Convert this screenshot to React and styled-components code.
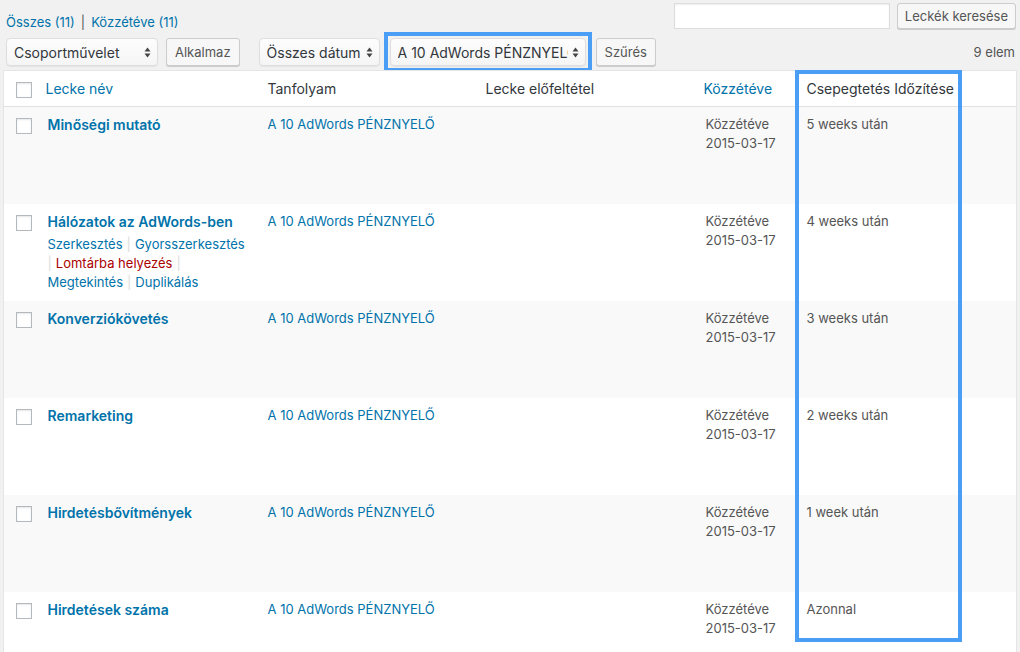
import React from "react";
import styled, { createGlobalStyle } from "styled-components";

const linkBlue = "#0073aa";
const textGray = "#555";
const darkText = "#32373c";
const markBlue = "#4a9ef5";

const GlobalStyle = createGlobalStyle`
    html, body {
        margin: 0;
        padding: 0;
        background: #f1f1f1;
    }
    body {
        font-family: Inter, "Liberation Sans", Arial, sans-serif;
        font-size: 13px;
        color: ${textGray};
        overflow: hidden;
    }
    * { box-sizing: border-box; }
`;

const Page = styled.div`
    width: 1020px;
    height: 652px;
    padding: 3px 3px 0 3px;
    overflow: hidden;
`;

const TopBar = styled.div`
    display: flex;
    justify-content: space-between;
    align-items: flex-start;
    height: 26px;
`;

const SubSub = styled.div`
    margin: 10px 0 0 3px;
    line-height: 19px;
    color: ${textGray};
`;

const Link = styled.a`
    color: ${props => props.danger ? "#a00" : linkBlue};
    text-decoration: none;
`;

const Title = styled.a`
    display: block;
    color: ${linkBlue};
    font-weight: 600;
    font-size: 14px;
    line-height: 19px;
    text-decoration: none;
`;

const Sep = styled.span`
    color: ${props => props.light ? "#ddd" : textGray};
    margin: 0 ${props => props.light ? "4px" : "6px"};
    margin-left: ${props => props.first ? "0" : undefined};
`;

const SearchBox = styled.div`
    display: flex;
    gap: 7px;
    margin-right: 1px;
`;

const SearchInput = styled.input`
    width: 216px;
    height: 26px;
    border: 1px solid #ddd;
    box-shadow: inset 0 1px 2px rgba(0, 0, 0, 0.07);
    background: #fff;
    margin: 0;
`;

const Button = styled.button`
    height: ${props => props.small ? "26px" : "28px"};
    padding: 0 ${props => props.small ? 7 : 8}px;
    margin: 0;
    background: #f7f7f7;
    border: 1px solid #ccc;
    border-radius: 3px;
    box-shadow: 0 1px 0 #ccc;
    color: ${textGray};
    font-family: inherit;
    font-size: 13px;
    white-space: nowrap;
    cursor: pointer;
`;

const Toolbar = styled.div`
    display: flex;
    align-items: center;
    height: 28px;
    margin-top: 9px;
    padding-left: 3px;
`;

const Group = styled.div`
    display: flex;
    align-items: center;
    gap: ${props => props.gap || 8}px;
    margin-right: ${props => props.after || 0}px;
`;

const SelectBox = styled.div`
    display: flex;
    align-items: center;
    gap: 4px;
    width: ${props => props.w}px;
    height: 28px;
    padding: 0 6px 0 7px;
    background: linear-gradient(#fdfdfd, #f5f5f5);
    border: 1px solid #dedede;
    border-radius: 4px;
    box-shadow: 0 1px 1px rgba(0, 0, 0, 0.06);
    color: ${darkText};
    font-size: 14px;
    white-space: nowrap;
    overflow: hidden;
`;

const SelectText = styled.span`
    overflow: hidden;
    flex: 1;
`;

const Mark = styled.div`
    display: flex;
    padding: 2px;
    margin: -6px;
    border: 4px solid ${markBlue};
`;

const Count = styled.div`
    margin-left: auto;
    margin-right: 2px;
    color: ${textGray};
`;

const TableWrap = styled.div`
    position: relative;
    margin-top: 4px;
    width: 1014px;
`;

const Table = styled.table`
    width: 1014px;
    table-layout: fixed;
    border-collapse: collapse;
    background: #fff;
    border: 1px solid #e5e5e5;
`;

const Th = styled.th`
    text-align: left;
    font-weight: 400;
    font-size: 14px;
    color: ${props => props.sort ? linkBlue : darkText};
    padding: 8px 8px;
    line-height: 19px;
    border-bottom: 1px solid #e1e1e1;
    white-space: nowrap;
`;

const CheckTh = styled.th`
    padding: 11px 0 0 12px;
    vertical-align: top;
    border-bottom: 1px solid #e1e1e1;
`;

const Row = styled.tr`
    background: ${props => props.odd ? "#f9f9f9" : "#fff"};
`;

const Td = styled.td`
    vertical-align: top;
    padding: 8px 8px 9px ${props => props.pl || 8}px;
    line-height: 19px;
    color: ${textGray};
`;

const CheckTd = styled.td`
    vertical-align: top;
    padding: 11px 0 0 12px;
`;

const Check = styled.span`
    display: block;
    width: 16px;
    height: 16px;
    border: 1px solid #b4b9be;
    background: #fff;
    box-shadow: inset 0 1px 2px rgba(0, 0, 0, 0.1);
`;

const RowActions = styled.div`
    margin-top: 4px;
    line-height: 19px;
    visibility: ${props => props.shown ? "visible" : "hidden"};
    white-space: nowrap;
`;

const Highlight = styled.div`
    position: absolute;
    left: 792px;
    top: 0;
    width: 167px;
    height: 572px;
    border: 4px solid ${markBlue};
    pointer-events: none;
`;

const Arrows = () => (
    <svg width="7" height="11" viewBox="0 0 7 11">
        <path d="M3.5 0.5 L6.5 4.5 L0.5 4.5 Z" fill="#444" />
        <path d="M3.5 10.5 L6.5 6.5 L0.5 6.5 Z" fill="#444" />
    </svg>
);

const Select = ({ w, children }) => (
    <SelectBox w={w}>
        <SelectText>{children}</SelectText>
        <Arrows />
    </SelectBox>
);

const lessons = [
    { name: "Minőségi mutató", drip: "5 weeks után" },
    { name: "Hálózatok az AdWords-ben", drip: "4 weeks után", actions: true },
    { name: "Konverziókövetés", drip: "3 weeks után" },
    { name: "Remarketing", drip: "2 weeks után" },
    { name: "Hirdetésbővítmények", drip: "1 week után" },
    { name: "Hirdetések száma", drip: "Azonnal" },
];

function Actions({ shown }) {
    return (
        <RowActions shown={shown}>
            <Link href="#">Szerkesztés</Link><Sep light>|</Sep><Link href="#">Gyorsszerkesztés</Link>
            <br />
            <Sep light first>|</Sep><Link href="#" danger>Lomtárba helyezés</Link><Sep light>|</Sep>
            <br />
            <Link href="#">Megtekintés</Link><Sep light>|</Sep><Link href="#">Duplikálás</Link>
        </RowActions>
    );
}

export default function App() {
    return (
        <Page>
            <GlobalStyle />
            <TopBar>
                <SubSub>
                    <Link href="#">Összes (11)</Link>
                    <Sep>|</Sep>
                    <Link href="#">Közzétéve (11)</Link>
                </SubSub>
                <SearchBox>
                    <SearchInput type="search" />
                    <Button small>Leckék keresése</Button>
                </SearchBox>
            </TopBar>

            <Toolbar>
                <Group after={19}>
                    <Select w={152}>Csoportművelet</Select>
                    <Button>Alkalmaz</Button>
                </Group>
                <Group gap={10}>
                    <Select w={121}>Összes dátum</Select>
                    <Mark>
                        <Select w={196}>A 10 AdWords PÉNZNYELŐ</Select>
                    </Mark>
                    <Button>Szűrés</Button>
                </Group>
                <Count>9 elem</Count>
            </Toolbar>

            <TableWrap>
                <Table>
                    <colgroup>
                        <col style={{ width: 34 }} />
                        <col style={{ width: 222 }} />
                        <col style={{ width: 218 }} />
                        <col style={{ width: 218 }} />
                        <col style={{ width: 103 }} />
                        <col style={{ width: 163 }} />
                        <col />
                    </colgroup>
                    <thead>
                        <tr>
                            <CheckTh><Check /></CheckTh>
                            <Th sort>Lecke név</Th>
                            <Th>Tanfolyam</Th>
                            <Th>Lecke előfeltétel</Th>
                            <Th sort>Közzétéve</Th>
                            <Th>Csepegtetés Időzítése</Th>
                            <Th />
                        </tr>
                    </thead>
                    <tbody>
                        {lessons.map((l, i) => (
                            <Row key={l.name} odd={i % 2 === 0}>
                                <CheckTd><Check /></CheckTd>
                                <Td pl={10}>
                                    <Title href="#">{l.name}</Title>
                                    <Actions shown={l.actions} />
                                </Td>
                                <Td><Link href="#">A 10 AdWords PÉNZNYELŐ</Link></Td>
                                <Td />
                                <Td pl={10}>Közzétéve<br />2015-03-17</Td>
                                <Td>{l.drip}</Td>
                                <Td />
                            </Row>
                        ))}
                    </tbody>
                </Table>
                <Highlight />
            </TableWrap>
        </Page>
    );
}
